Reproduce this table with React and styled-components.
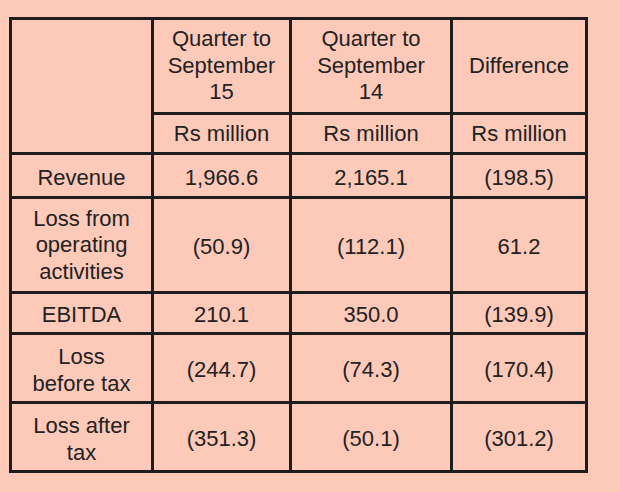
import styled, { createGlobalStyle } from "styled-components";

const GlobalStyle = createGlobalStyle`
  html, body {
    margin: 0;
    padding: 0;
    background-color: #fdc9b9;
  }
`;

const rows = [
  { label: ["Revenue"], values: ["1,966.6", "2,165.1", "(198.5)"], height: 41 },
  {
    label: ["Loss from", "operating", "activities"],
    values: ["(50.9)", "(112.1)", "61.2"],
    height: 92,
  },
  { label: ["EBITDA"], values: ["210.1", "350.0", "(139.9)"], height: 38 },
  {
    label: ["Loss", "before tax"],
    values: ["(244.7)", "(74.3)", "(170.4)"],
    height: 66,
  },
  {
    label: ["Loss after", "tax"],
    values: ["(351.3)", "(50.1)", "(301.2)"],
    height: 66,
  },
];

const headers = [
  ["Quarter to", "September", "15"],
  ["Quarter to", "September", "14"],
  ["Difference"],
];

// joins the lines of a cell with hard breaks so wrapping matches the print
function Lines({ lines }) {
  return (
    <Text>
      {lines.map((line, i) => (
        <span key={i}>
          {line}
          {i < lines.length - 1 && <br />}
        </span>
      ))}
    </Text>
  );
}

function App() {
  const rowHeights = [92, 37, ...rows.map((r) => r.height)];

  return (
    <Page>
      <GlobalStyle />
      <Table rowHeights={rowHeights}>
        <Cell rowSpan={2} />
        {headers.map((h, i) => (
          <Cell key={"h" + i}>
            <Lines lines={h} />
          </Cell>
        ))}
        {headers.map((_, i) => (
          <Cell key={"u" + i} drop={2}>
            <Text>Rs million</Text>
          </Cell>
        ))}
        {rows.map((row, r) => [
          <Cell key={"l" + r} drop={row.label.length === 3 ? 1 : 5}>
            <Lines lines={row.label} />
          </Cell>,
          ...row.values.map((v, c) => (
            <Cell key={r + "-" + c} drop={5}>
              <Text>{v}</Text>
            </Cell>
          )),
        ])}
      </Table>
    </Page>
  );
}

export default App;

const Page = styled.div`
  min-height: 492px;
  padding: 17px 0 0 9px;
  box-sizing: border-box;
  background-color: #fdc9b9;
`;

const Table = styled.div`
  display: inline-grid;
  grid-template-columns: 139px 135px 158px 132px;
  grid-template-rows: ${(props) =>
    props.rowHeights.map((h) => h + "px").join(" ")};
  gap: 3px;
  padding: 3px;
  background-color: #1d1d1d;
`;

const Cell = styled.div`
  grid-row: ${(props) => (props.rowSpan ? "span " + props.rowSpan : "auto")};
  padding-top: ${(props) => props.drop || 0}px;
  box-sizing: border-box;
  background-color: #fdc9b9;
  display: flex;
  align-items: center;
  justify-content: center;
`;

const Text = styled.div`
  text-align: center;
  white-space: nowrap;
  font-family: "Liberation Sans", Arial, sans-serif;
  font-size: 22px;
  line-height: 26.5px;
  color: #222222;
`;
